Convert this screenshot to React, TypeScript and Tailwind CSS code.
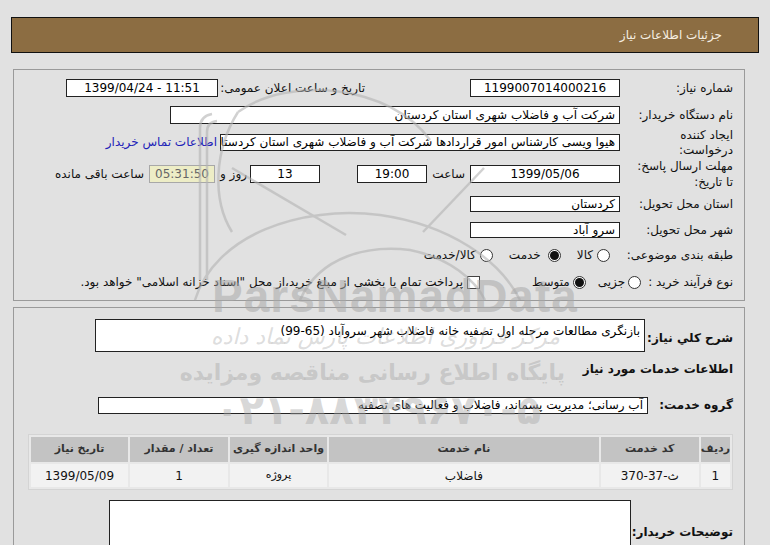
import React from "react";

type BoxProps = {
  className?: string;
  ltr?: boolean;
  center?: boolean;
  children?: React.ReactNode;
};

function Box({ className = "", ltr = false, center = false, children }: BoxProps) {
  return (
    <div
      dir={ltr ? "ltr" : "rtl"}
      className={`shrink-0 bg-white border border-[#222] text-[12px] text-black flex items-center overflow-hidden whitespace-nowrap px-[4px] ${
        center ? "justify-center" : "justify-start"
      } ${className}`}
    >
      {children}
    </div>
  );
}

function Radio({ checked = false }: { checked?: boolean }) {
  return (
    <span className="w-[13px] h-[13px] rounded-full border border-[#333] bg-white flex items-center justify-center shrink-0">
      {checked && <span className="w-[9px] h-[9px] rounded-full bg-[#111]" />}
    </span>
  );
}

function Watermark() {
  return (
    <div className="absolute inset-0 pointer-events-none">
      <svg width="770" height="545" className="absolute left-0 top-0" fill="none" stroke="#b4b4b4" strokeWidth="2.5" opacity="0.6">
        <path d="M200 280 V128 Q200 116 212 114" />
        <path d="M207 280 V132 Q207 122 217 121" />
        <path d="M238 112 C214 150 212 200 232 232" />
        <path d="M232 168 L346 235" />
        <path d="M238 112 C290 75 390 85 430 140" />
        <path d="M484 168 L423 232" />
        <path d="M195 300 C215 235 300 205 380 215 C450 225 500 260 520 300" />
        <path d="M300 300 C320 255 370 245 410 250 C450 258 475 280 485 300" />
      </svg>
      <div className="absolute left-[212px] top-[273px] font-['Liberation_Sans',sans-serif] font-bold text-[46px] leading-none text-[#a8a8a8]/55 tracking-[1px] whitespace-nowrap">
        ParsNamadData
      </div>
      <div dir="rtl" className="absolute right-[210px] top-[326px] italic text-[22px] leading-none text-[#a8a8a8]/40 whitespace-nowrap">
        مرکز فراوری اطلاعات پارس نماد داده
      </div>
      <div dir="rtl" className="absolute right-[205px] top-[362px] font-bold text-[22px] leading-none text-[#a8a8a8]/45 whitespace-nowrap">
        پایگاه اطلاع رسانی مناقصه ومزایده
      </div>
      <div dir="ltr" className="absolute left-[215px] top-[390px] font-bold text-[40px] leading-none tracking-[3px] text-[#a8a8a8]/45 whitespace-nowrap">
        ۰۲۱-۸۸۳۴۹۶۷۰-۵
      </div>
    </div>
  );
}

export default function App() {
  return (
    <div
      dir="rtl"
      className="relative w-[770px] h-[545px] overflow-hidden bg-[#e1e1e1] font-['DejaVu_Sans',sans-serif] text-[12px] text-[#111]"
    >
      <div className="pt-[17px] pl-[11px] pr-[11px]">
        <div className="h-[36px] bg-[#8c6d42] border border-[#111] flex items-center pr-[36px] text-[#f6efe2] text-[12px]">
          جزئیات اطلاعات نیاز
        </div>

        {/* panel 1 */}
        <div className="mt-[16px] mr-[14px] ml-[2px] border border-[#9a9a9a] pt-[5px] pb-[4px] pr-[11px]">
          <div className="flex items-center h-[26px]">
            <div className="w-[113px] shrink-0">شماره نیاز:</div>
            <Box ltr center className="w-[150px] h-[18px]">1199007014000216</Box>
            <div className="w-[147px] mr-[105px] shrink-0">تاریخ و ساعت اعلان عمومی:</div>
            <Box ltr center className="w-[152px] h-[18px]">1399/04/24 - 11:51</Box>
          </div>

          <div className="flex items-center h-[27px]">
            <div className="w-[113px] shrink-0">نام دستگاه خریدار:</div>
            <Box className="w-[450px] h-[18px]">شرکت آب و فاضلاب شهری استان کردستان</Box>
          </div>

          <div className="flex items-center h-[28px]">
            <div className="w-[113px] shrink-0 leading-[15px] pt-[2px]">
              ایجاد کننده
              <br />
              درخواست:
            </div>
            <Box className="w-[400px] h-[17px]">
              هیوا ویسی کارشناس امور قراردادها شرکت آب و فاضلاب شهری استان کردستان
            </Box>
            <span className="mr-[3px] text-[#2222b8] whitespace-nowrap">اطلاعات تماس خریدار</span>
          </div>

          <div className="flex items-center h-[35px]">
            <div className="w-[113px] shrink-0 leading-[16px]">
              مهلت ارسال پاسخ:
              <br />
              تا تاریخ:
            </div>
            <Box ltr center className="w-[150px] h-[18px]">1399/05/06</Box>
            <div className="w-[43px] pr-[5px] shrink-0">ساعت</div>
            <Box ltr center className="w-[70px] h-[18px]">19:00</Box>
            <Box ltr center className="w-[70px] h-[18px] mr-[37px]">13</Box>
            <div className="mr-[3px] ml-[5px] shrink-0 whitespace-nowrap">روز و</div>
            <div className="w-[66px] h-[18px] shrink-0 bg-[#ededc6] border border-[#a8a8a8] text-[#666] flex items-center justify-center" dir="ltr">
              05:31:50
            </div>
            <div className="mr-[5px] whitespace-nowrap">ساعت باقی مانده</div>
          </div>

          <div className="flex items-center h-[26px]">
            <div className="w-[113px] shrink-0">استان محل تحویل:</div>
            <Box className="w-[150px] h-[16px]">کردستان</Box>
          </div>

          <div className="flex items-center h-[25px]">
            <div className="w-[113px] shrink-0">شهر محل تحویل:</div>
            <Box className="w-[150px] h-[16px]">سرو آباد</Box>
          </div>

          <div className="flex items-center h-[26px]">
            <div className="w-[113px] shrink-0">طبقه بندی موضوعی:</div>
            <div className="flex items-center mr-[10px] gap-[4px]">
              <Radio />
              <span>کالا</span>
            </div>
            <div className="flex items-center mr-[16px] gap-[7px]">
              <Radio checked />
              <span>خدمت</span>
            </div>
            <div className="flex items-center mr-[16px] gap-[4px]">
              <Radio />
              <span>کالا/خدمت</span>
            </div>
          </div>

          <div className="flex items-center h-[28px]">
            <div className="shrink-0">نوع فرآیند خرید :</div>
            <div className="flex items-center mr-[7px] gap-[3px]">
              <Radio />
              <span>جزیی</span>
            </div>
            <div className="flex items-center mr-[12px] gap-[3px]">
              <Radio checked />
              <span>متوسط</span>
            </div>
            <div className="flex items-center mr-[52px] gap-[4px] whitespace-nowrap">
              <span className="w-[13px] h-[13px] border border-[#444] bg-white shrink-0" />
              <span>پرداخت تمام یا بخشی از مبلغ خرید،از محل "اسناد خزانه اسلامی" خواهد بود.</span>
            </div>
          </div>
        </div>

        {/* panel 2 */}
        <div className="mt-[6px] mr-[14px] ml-[2px] border border-[#9a9a9a] pt-[11px] pr-[11px] h-[300px]">
          <div className="flex items-center">
            <div className="w-[88px] shrink-0 font-bold text-[12px] pt-[5px] whitespace-nowrap">شرح کلي نياز:</div>
            <Box className="w-[550px] h-[33px] !items-start pt-[2px]">
              بازنگری مطالعات مرحله اول تصفیه خانه فاضلاب شهر سروآباد (65-99)
            </Box>
          </div>

          <div className="h-[34px] flex items-center font-bold text-[12px] whitespace-nowrap">اطلاعات خدمات مورد نیاز</div>

          <div className="flex items-center mt-[10px]">
            <div className="w-[85px] shrink-0 font-bold text-[12px] whitespace-nowrap">گروه خدمت:</div>
            <Box className="w-[550px] h-[17px]">آب رسانی؛ مدیریت پسماند، فاضلاب و فعالیت های تصفیه</Box>
          </div>

          <table className="mt-[20px] w-[705px] -ml-[1px] border border-[#d4d4d4] bg-[#e8e8e8] border-separate border-spacing-[2px] text-center">
            <thead>
              <tr className="h-[25px] text-[11px] font-bold text-[#333]">
                <th className="bg-[#c3c3c3] w-[25px] font-bold">ردیف</th>
                <th className="bg-[#c3c3c3] w-[98px] font-bold">کد خدمت</th>
                <th className="bg-[#c3c3c3] font-bold">نام خدمت</th>
                <th className="bg-[#c3c3c3] w-[97px] font-bold">واحد اندازه گیری</th>
                <th className="bg-[#c3c3c3] w-[98px] font-bold">تعداد / مقدار</th>
                <th className="bg-[#c3c3c3] w-[97px] font-bold">تاریخ نیاز</th>
              </tr>
            </thead>
            <tbody>
              <tr className="h-[23px] text-[12px]">
                <td className="bg-[#f2f2f2]">1</td>
                <td className="bg-[#f2f2f2]" dir="ltr">370-37-ث</td>
                <td className="bg-[#f2f2f2]">فاضلاب</td>
                <td className="bg-[#f2f2f2] text-[11px]">پروژه</td>
                <td className="bg-[#f2f2f2]">1</td>
                <td className="bg-[#f2f2f2]">1399/05/09</td>
              </tr>
            </tbody>
          </table>

          <div className="flex items-start mt-[10px]">
            <div className="w-[102px] shrink-0 font-bold text-[12px] whitespace-nowrap pt-[23px]">توضیحات خریدار:</div>
            <Box className="w-[522px] h-[62px]" />
          </div>
        </div>
      </div>
      <Watermark />
    </div>
  );
}
